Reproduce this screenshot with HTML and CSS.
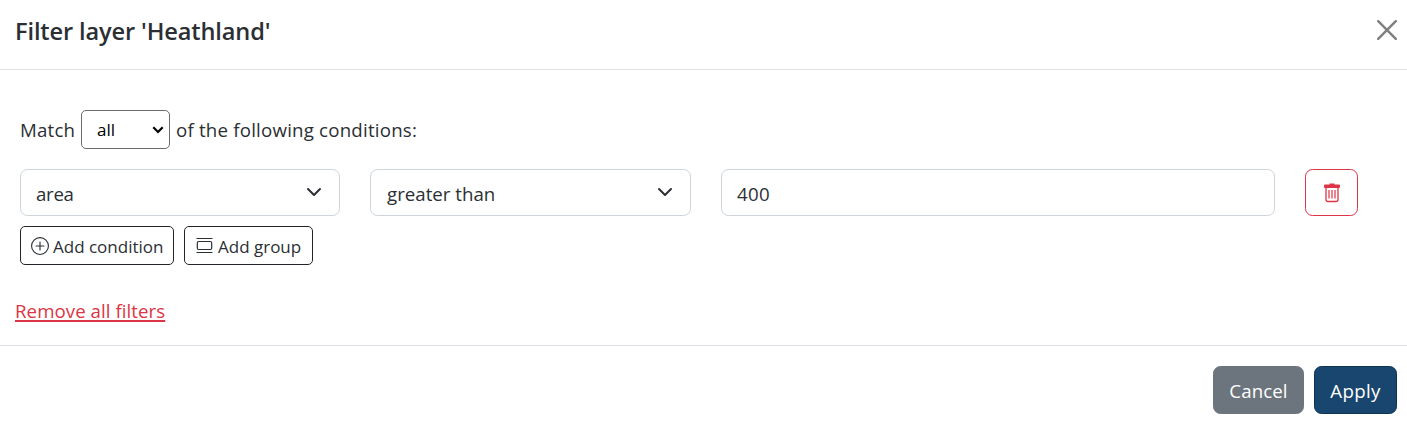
FILE: index.html
```html
<!DOCTYPE html>
<html lang="en">
<head>
<meta charset="utf-8">
<title>Filter layer</title>
<link rel="stylesheet" href="styles.css">
</head>
<body>
<div class="modal" role="dialog">
  <header class="modal-header">
    <h5 class="modal-title"><span>Filter layer 'Heathland'</span></h5>
    <button class="btn-close" aria-label="Close">
      <svg width="20" height="20" viewBox="0 0 20 20"><path d="M1.2 1.2 18.8 18.8M18.8 1.2 1.2 18.8" fill="none" stroke="currentColor" stroke-width="2.4" stroke-linecap="round"/></svg>
    </button>
  </header>
  <main class="modal-body">
    <div class="filter">
      <div class="match">
        <span class="match-label">Match</span>
        <div class="match-select" role="combobox"><span>all</span>
          <svg width="12" height="8" viewBox="0 0 12 8"><path d="M1.3 1.3 6 6 10.700 1.300" fill="none" stroke="currentColor" stroke-width="2.200"/></svg>
        </div>
        <span class="match-rest">of the following conditions:</span>
      </div>
      <div class="condition">
        <div class="field select" role="combobox"><span class="area">area</span>
          <svg width="16" height="16" viewBox="0 0 16 16"><path d="m2 5 6 6 6-6" fill="none" stroke="currentColor" stroke-width="2" stroke-linecap="round" stroke-linejoin="round"/></svg>
        </div>
        <div class="field select" role="combobox"><span class="operator">greater than</span>
          <svg width="16" height="16" viewBox="0 0 16 16"><path d="m2 5 6 6 6-6" fill="none" stroke="currentColor" stroke-width="2" stroke-linecap="round" stroke-linejoin="round"/></svg>
        </div>
        <div class="field"><span class="value">400</span></div>
        <button class="btn-delete" aria-label="Delete condition">
          <svg width="18" height="20" viewBox="0 0 18 20"><path d="M6.500 1.500V.600h5v.900h4.600c.500 0 .900.400.900.900v1.700c0 .500-.400.900-.900.900H1.900c-.500 0-.9-.4-.9-.9V2.400c0-.5.4-.9.900-.9z" fill="currentColor"/><path d="M3 5v11.500a2 2 0 0 0 2 2h8a2 2 0 0 0 2-2V5" fill="none" stroke="currentColor" stroke-width="1.300"/><path d="M6 7v8.500M9 7v8.500M12 7v8.500" stroke="currentColor" stroke-width="1.200"/></svg>
        </button>
      </div>
      <div class="actions">
        <button class="btn-add"><svg width="18" height="18" viewBox="0 0 16 16" fill="currentColor"><path d="M8 15A7 7 0 1 1 8 1a7 7 0 0 1 0 14m0 1A8 8 0 1 0 8 0a8 8 0 0 0 0 16"/><path d="M8 4a.5.5 0 0 1 .5.5v3h3a.5.5 0 0 1 0 1h-3v3a.5.5 0 0 1-1 0v-3h-3a.5.5 0 0 1 0-1h3v-3A.5.5 0 0 1 8 4"/></svg><span class="add-condition">Add condition</span></button>
        <button class="btn-add group"><svg width="18" height="18" viewBox="0 0 18 18" fill="none" stroke="currentColor"><path d="M.5 1.500h16M.5 15.500h16" stroke-width="1.200"/><rect x="1.300" y="4.500" width="14.400" height="8" rx="1.500" stroke-width="1.200"/></svg><span class="add-group">Add group</span></button>
      </div>
    </div>
    <a class="remove" href="#">Remove all filters</a>
  </main>
  <footer class="modal-footer">
    <button class="btn cancel"><span>Cancel</span></button>
    <button class="btn apply"><span>Apply</span></button>
  </footer>
</div>
</body>
</html>
```
FILE: styles.css
```css
* { box-sizing: border-box; }
body {
  margin: 0;
  background: #fff;
  color: #2b2f33;
  font: 18.7px/30px "Open Sans", "Noto Sans", sans-serif;
}
button { font: inherit; margin: 0; padding: 0; background: none; cursor: pointer; }
svg { display: block; flex: none; }
.modal { height: 431px; overflow: hidden; }
.modal-header {
  height: 70px;
  padding: 0 10px 9px 15px;
  display: flex;
  align-items: center;
  justify-content: space-between;
  border-bottom: 1px solid #dee2e6;
}
.modal-title { margin: 0; padding-top: 2px; color: #2b2f33; font-size: 23.6px; font-weight: 600; letter-spacing: -0.13px; }
.btn-close { border: 0; color: #7f7f7f; }
.modal-body { height: 276px; padding: 40px 15px 0; border-bottom: 1px solid #dee2e6; }
.filter { padding: 0 5px; }
.match { display: flex; align-items: center; height: 39px; }
.match-label { width: 61px; letter-spacing: 0.2px; }
.match-rest { letter-spacing: 0.200px; }
.match-select {
  display: flex;
  align-items: center;
  justify-content: space-between;
  width: 89px;
  height: 39px;
  padding: 1px 5px 0 15px;
  margin-right: 6px;
  border: 1px solid #6b6b6b;
  border-radius: 5px;
  color: #000;
  font-size: 17px;
}
.condition {
  display: grid;
  grid-template-columns: 320px 321px 554px 53px;
  column-gap: 30px;
  height: 47px;
  margin-top: 20px;
}
.field {
  display: flex;
  align-items: center;
  padding: 2px 15px 0;
  border: 1px solid #ced4da;
  border-radius: 7.500px;
}
.area { letter-spacing: -0.3px; }
.operator { padding-left: 1px; }
.value { letter-spacing: 0.3px; }
.select { justify-content: space-between; padding-right: 17px; }
.select svg { margin-top: -4px; }
.btn-delete, .btn-add, .btn { display: flex; align-items: center; }
.btn-delete {
  justify-content: center;
  border: 1px solid #dc3545;
  border-radius: 7.500px;
  color: #dc3545;
}
.actions { display: flex; gap: 10px; margin-top: 10px; }
.btn-add {
  width: 154px;
  height: 39px;
  padding: 2px 0 0 10px;
  gap: 4px;
  border: 1px solid #212529;
  border-radius: 5px;
  color: #2b2f33;
  font-size: 17px;
  white-space: nowrap;
}
.btn-add svg { margin-top: -2px; }
.group { width: 129px; padding-left: 11px; }
.remove { display: block; width: max-content; margin-top: 31px; color: #dc3545; letter-spacing: 0.050px; text-decoration: underline; text-underline-offset: 2px; text-decoration-thickness: 2px; }
.modal-footer { display: flex; justify-content: flex-end; gap: 10px; padding: 20px 10px; }
.btn { justify-content: center; height: 48px; padding-top: 1px; border-radius: 7.500px; color: #fff; }
.cancel { width: 91px; background: #6c757d; border: 1px solid #6c757d; letter-spacing: 0.1px; }
.apply { width: 83px; background: #18466e; border: 1px solid #0d3355; letter-spacing: 0.3px; }
```
